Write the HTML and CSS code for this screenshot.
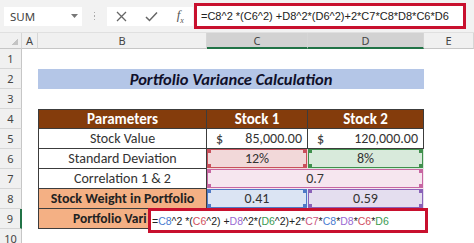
FILE: index.html
```html
<!DOCTYPE html>
<html>
<head>
    <title>Portfolio Variance</title>
    <meta charset="UTF-8">
    <link rel="stylesheet" href="styles.css">
</head>
<body>
    <div class="bar">
        <div class="namebox">
            <span>SUM</span>
            <svg width="7" height="4" viewBox="0 0 7 4"><path d="M0 0 L7 0 L3.5 4 Z" fill="#777"/></svg>
        </div>
        <div class="grip"><i></i><i></i><i></i></div>
        <div class="fnbox">
            <svg width="11" height="11" viewBox="0 0 11 11"><path d="M1 1 L10 10 M10 1 L1 10" stroke="#666" stroke-width="1.3"/></svg>
            <svg width="13" height="11" viewBox="0 0 13 11"><path d="M1 6 L4.5 9.5 L12 1.5" stroke="#666" stroke-width="1.5" fill="none"/></svg>
            <span class="fx">f<sub>x</sub></span>
        </div>
        <div class="formula">=C8^2 *(C6^2) +D8^2*(D6^2)+2*C7*C8*D8*C6*D6</div>
    </div>

    <div class="sheet">
        <div class="ch corner"></div>
        <div class="ch">A</div>
        <div class="ch">B</div>
        <div class="ch sel">C</div>
        <div class="ch sel">D</div>
        <div class="ch">E</div>

        <div class="rh">1</div><div class="blank span5"></div>

        <div class="rh">2</div><div class="blank"></div>
        <div class="title span3">Portfolio Variance Calculation</div>
        <div class="blank"></div>

        <div class="rh">3</div><div class="blank span5"></div>

        <div class="rh">4</div><div class="blank"></div>
        <div class="c th first">Parameters</div>
        <div class="c th">Stock 1</div>
        <div class="c th">Stock 2</div>
        <div class="blank"></div>

        <div class="rh">5</div><div class="blank"></div>
        <div class="c first">Stock Value</div>
        <div class="c money"><span>$</span><span>85,000.00</span></div>
        <div class="c money"><span>$</span><span>120,000.00</span></div>
        <div class="blank"></div>

        <div class="rh">6</div><div class="blank"></div>
        <div class="c first">Standard Deviation</div>
        <div class="c ref red">12%</div>
        <div class="c ref green">8%</div>
        <div class="blank"></div>

        <div class="rh">7</div><div class="blank"></div>
        <div class="c first">Correlation 1 &amp; 2</div>
        <div class="c ref pink span2">0.7</div>
        <div class="blank"></div>

        <div class="rh">8</div><div class="blank"></div>
        <div class="c first weight">Stock Weight in Portfolio</div>
        <div class="c ref blue">0.41</div>
        <div class="c ref purple">0.59</div>
        <div class="blank"></div>

        <div class="rh sel">9</div><div class="blank"></div>
        <div class="c first weight var">Portfolio Vari</div>
        <div class="c"></div>
        <div class="c"></div>
        <div class="blank"></div>

        <div class="rh">10</div><div class="blank span5"></div>

        <div class="editor">=<b class="k-blue">C8</b>^2 *(<b class="k-red">C6</b>^2) +<b class="k-purple">D8</b>^2*(<b class="k-green">D6</b>^2)+2*<b class="k-pink">C7</b>*<b class="k-blue">C8</b>*<b class="k-purple">D8</b>*<b class="k-red">C6</b>*<b class="k-green">D6</b></div>
    </div>
</body>
</html>
```

FILE: styles.css
```css
body {
    margin: 0;
    width: 474px;
    height: 243px;
    overflow: hidden;
    background: #fff;
    font-family: Carlito, Calibri, "Liberation Sans", sans-serif;
}

/* formula bar */
.bar {
    display: flex;
    align-items: center;
    height: 33px;
    padding-left: 4px;
    box-sizing: border-box;
    background: #f2f2f2;
    border-bottom: 1px solid #e0e0e0;
}
.namebox {
    width: 78px;
    height: 19px;
    display: flex;
    align-items: center;
    justify-content: space-between;
    padding: 0 4px 0 6px;
    box-sizing: border-box;
    background: #fff;
    font-family: "Noto Sans", sans-serif;
    font-size: 11.5px;
    color: #444;
}
.grip {
    width: 25px;
    display: flex;
    flex-direction: column;
    align-items: center;
    gap: 2px;
}
.grip i {
    width: 1.5px;
    height: 1.5px;
    background: #aaa;
}
.fnbox {
    width: 86px;
    height: 19px;
    display: flex;
    align-items: center;
    justify-content: space-around;
    background: #fff;
}
.fx {
    font-family: "Liberation Serif", serif;
    font-style: italic;
    font-size: 13px;
    color: #555;
}
.fx sub {
    font-size: 8px;
}
.formula {
    width: 272px;
    height: 26px;
    margin-left: 1px;
    display: flex;
    align-items: center;
    padding-left: 4px;
    box-sizing: border-box;
    border: 3px solid #c8102e;
    background: #fff;
    font-family: "Liberation Sans", sans-serif;
    font-size: 11px;
    color: #222;
    white-space: nowrap;
    overflow: hidden;
}

/* sheet grid */
.sheet {
    position: relative;
    display: grid;
    grid-template-columns: 22px 16px 169px 101px 116px 50px;
    grid-template-rows: 16px repeat(10, 20px);
}
.ch {
    display: flex;
    align-items: center;
    justify-content: center;
    background: #f0f0f0;
    border-right: 1px solid #d6d6d6;
    border-bottom: 1px solid #c6c6c6;
    font-family: "Noto Sans", sans-serif;
    font-size: 11px;
    color: #444;
}
.ch.sel {
    background: #d2d2d2;
    border-bottom: 2px solid #217346;
}
.corner {
    background: linear-gradient(135deg, #f0f0f0 60%, #c4c4c4 60%) no-repeat right 3px bottom 3px / 8px 8px, #f0f0f0;
}
.rh {
    display: flex;
    align-items: center;
    justify-content: center;
    background: #f0f0f0;
    border-right: 1px solid #c6c6c6;
    border-bottom: 1px solid #d6d6d6;
    font-family: "Noto Sans", sans-serif;
    font-size: 11px;
    color: #444;
}
.rh.sel {
    border-right: 2px solid #217346;
}
.span5 { grid-column: span 5; }
.span3 { grid-column: span 3; }
.span2 { grid-column: span 2; }

.title {
    display: flex;
    align-items: center;
    justify-content: center;
    background: #b4c6e7;
    font-size: 16.5px;
    font-weight: bold;
    font-style: italic;
    color: #10102a;
}

/* table cells */
.c {
    display: flex;
    align-items: center;
    justify-content: center;
    box-sizing: border-box;
    border-right: 1px solid #3c3c3c;
    border-bottom: 1px solid #3c3c3c;
    font-size: 14px;
    color: #333;
    white-space: nowrap;
    overflow: hidden;
}
.c.first {
    border-left: 1px solid #3c3c3c;
}
.th {
    border-top: 1px solid #3c3c3c;
    background: #843c0c;
    color: #fff;
    font-weight: bold;
    font-size: 15px;
}
.money {
    justify-content: space-between;
    padding: 0 5px 0 9px;
}
.weight {
    background: #f4b084;
    font-weight: bold;
    color: #222;
}
.var {
    justify-content: flex-start;
    padding-left: 34px;
    font-size: 13.5px;
}

/* highlighted references */
.ref {
    --k: #000;
    box-shadow: inset 0 0 0 1px var(--k);
    background:
        linear-gradient(var(--k), var(--k)) left top / 4px 4px no-repeat,
        linear-gradient(var(--k), var(--k)) right top / 4px 4px no-repeat,
        linear-gradient(var(--k), var(--k)) left bottom / 4px 4px no-repeat,
        linear-gradient(var(--k), var(--k)) right bottom / 4px 4px no-repeat,
        var(--f);
    border-color: transparent;
}
.red { --k: #c9505c; --f: #f2d8d9; }
.green { --k: #3f8f4c; --f: #d8eadb; }
.pink { --k: #c766a2; --f: #f6e6ef; }
.blue { --k: #4f79c6; --f: #dbe4f3; }
.purple { --k: #8a62b8; --f: #e4deef; }

/* in-cell editor over row 9 */
.editor {
    position: absolute;
    left: 148px;
    top: 175px;
    width: 280px;
    height: 25px;
    box-sizing: border-box;
    border: 3px solid #c8102e;
    background: #fff;
    padding-left: 1px;
    display: flex;
    align-items: center;
    font-family: "Liberation Sans", sans-serif;
    font-size: 10.5px;
    color: #222;
    white-space: nowrap;
}
.editor b { font-weight: normal; }
.k-blue { color: #4a7bd0; }
.k-red { color: #d0505e; }
.k-purple { color: #9a6ad2; }
.k-green { color: #3a9a52; }
.k-pink { color: #c9567e; }
```
